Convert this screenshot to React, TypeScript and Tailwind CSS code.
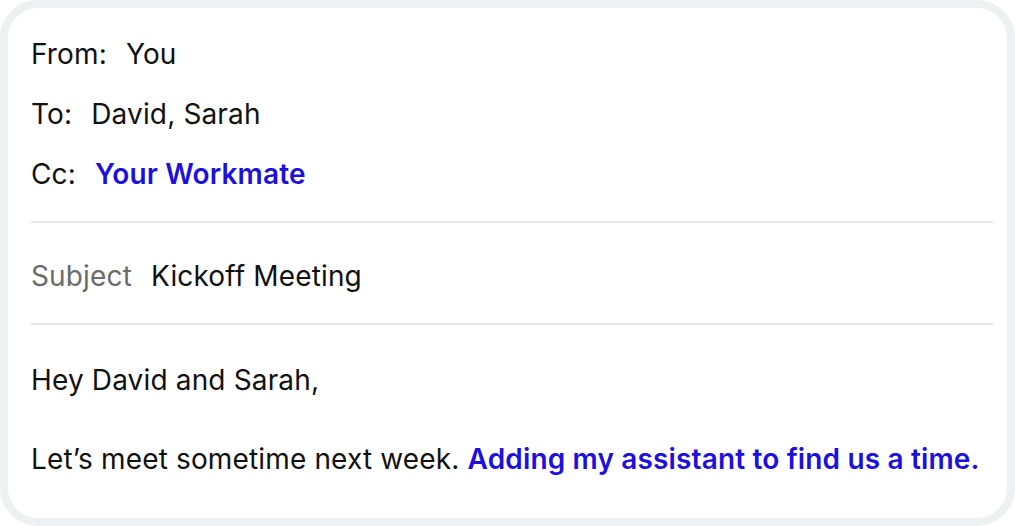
export default function App() {
  return (
    <div className="w-[1015px] h-[526px] bg-white" style={{ fontFamily: 'Inter, "Noto Sans", sans-serif' }}>
      <div className="h-full border-8 border-[#eef0f2] rounded-[38px] bg-white pl-[23px] pr-[14px] text-[28px] text-[#111] tracking-[0.15px]">
        <div className="flex flex-col gap-[24px] pt-[28px] pb-[29px]">
          <div className="flex gap-[19px] leading-[36px]">
            <span>From:</span>
            <span>You</span>
          </div>
          <div className="flex gap-[19px] leading-[36px]">
            <span>To:</span>
            <span>David, Sarah</span>
          </div>
          <div className="flex gap-[19px] leading-[36px]">
            <span>Cc:</span>
            <span className="font-semibold text-[#1d10dc]">Your Workmate</span>
          </div>
        </div>
        <div className="h-[2px] bg-[#e8e8e8]" />
        <div className="flex gap-[19px] leading-[36px] pt-[35px] pb-[29px]">
          <span className="text-[#6b6b6b]">Subject</span>
          <span>Kickoff Meeting</span>
        </div>
        <div className="h-[2px] bg-[#e8e8e8]" />
        <div className="flex flex-col gap-[43px] pt-[37px] leading-[36px]">
          <p>Hey David and Sarah,</p>
          <p>
            Let’s meet sometime next week.{' '}
            <span className="font-semibold text-[#1d10dc]">Adding my assistant to find us a time.</span>
          </p>
        </div>
      </div>
    </div>
  )
}
